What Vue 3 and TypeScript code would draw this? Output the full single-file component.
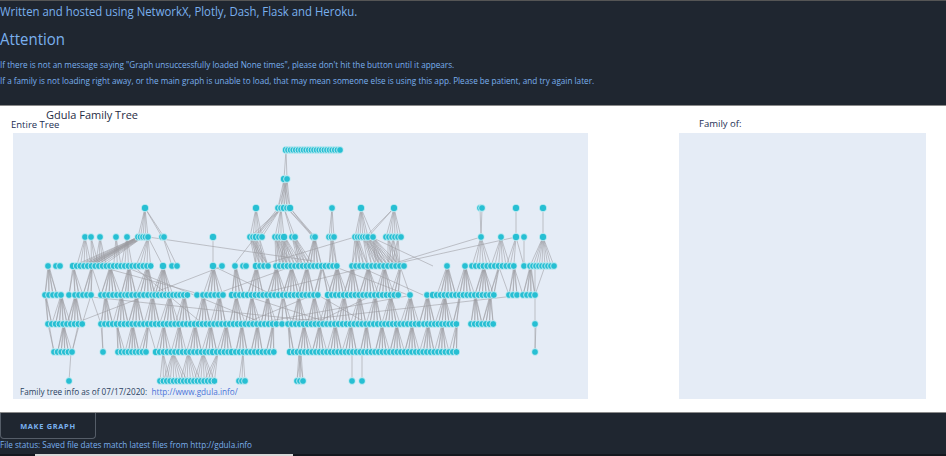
<script setup lang="ts">
// x ranges per generation: [from, to, step]
type Range = [number, number, number]
// parent x, first child x, last child x
type Family = [number, number, number]

const rowY = [17, 46, 75, 104, 133, 162, 191, 219, 248]

const ranges: Range[][] = [
  [[273, 273, 1], [275, 326, 2.6]],
  [[271, 271, 1], [274, 274, 1]],
  [[132, 132, 1], [243, 243, 1], [265, 278, 3], [319, 319, 1], [348, 348, 1], [381, 381, 1], [467, 469, 2], [503, 503, 1], [530, 530, 1]],
  [[72, 72, 1], [78, 78, 1], [87, 87, 1], [103, 103, 1], [114, 114, 1], [125, 135, 2.5], [149, 151, 2], [200, 200, 1], [237, 249, 3], [262, 272, 3], [279, 282, 3], [300, 302, 2], [316, 321, 2.5], [342, 355, 2.6], [360, 360, 1], [373, 387, 3], [468, 468, 1], [488, 488, 1], [503, 503, 1], [511, 511, 1], [530, 530, 1]],
  [[35, 35, 1], [43, 47, 4], [60, 136, 3.7], [150, 150, 1], [159, 164, 5], [200, 200, 1], [209, 209, 1], [222, 222, 1], [230, 233, 3], [243, 254, 4], [263, 325, 3.8], [339, 389, 4], [434, 434, 1], [452, 452, 1], [459, 502, 3.8], [511, 511, 1], [517, 542, 3]],
  [[32, 49, 4], [56, 56, 1], [62, 78, 4], [88, 110, 4], [115, 137, 4], [142, 174, 3.6], [184, 184, 1], [190, 210, 4], [219, 305, 3.9], [315, 385, 3.9], [397, 397, 1], [414, 414, 1], [420, 480, 3.8], [496, 504, 4], [510, 523, 4]],
  [[35, 69, 3.8], [88, 264, 3.9], [269, 269, 1], [275, 367, 3.9], [372, 405, 3.8], [411, 442, 3.6], [458, 480, 3.7], [522, 522, 1]],
  [[41, 58, 3.6], [90, 90, 1], [105, 132, 3.5], [143, 260, 3.8], [277, 442, 3.7], [522, 522, 1]],
  [[56, 56, 1], [147, 203, 3.4], [226, 232, 3], [284, 289, 3], [339, 339, 1], [349, 349, 1]],
]

const heavy = new Set([273, 271, 132, 243, 348, 381, 503, 530, 200, 60, 150, 219, 315, 420, 143, 277])

const nodes = ranges.map((row) => {
  const xs: number[] = []
  for (const [from, to, step] of row) {
    if (from === to) {
      xs.push(from)
      continue
    }
    const n = Math.round((to - from) / step)
    for (let i = 0; i <= n; i++) xs.push(Math.round((from + i * step) * 10) / 10)
  }
  return xs
})

// hand-placed fans for the upper generations and the last one
const families: Record<number, Family[]> = {
  0: [[273, 271, 275]],
  1: [[271, 264, 280], [274, 264, 280]],
  2: [[132, 124, 136], [132, 148, 152], [243, 236, 250], [268, 237, 249], [268, 261, 273], [271, 278, 283], [274, 299, 303], [277, 299, 303], [319, 315, 322], [348, 341, 356], [348, 359, 361], [381, 372, 388], [381, 352, 356], [467, 467, 469], [469, 467, 469], [503, 503, 504], [530, 530, 531]],
  3: [[72, 62, 80], [78, 76, 88], [87, 80, 96], [103, 98, 110], [114, 106, 120], [125, 60, 80], [127, 66, 84], [130, 70, 90], [135, 122, 150], [150, 156, 165], [200, 200, 201], [237, 243, 255], [240, 243, 255], [243, 243, 255], [246, 248, 258], [262, 263, 275], [265, 263, 280], [268, 270, 286], [272, 266, 290], [279, 285, 298], [282, 285, 302], [301, 293, 310], [302, 293, 310], [318, 316, 328], [320, 316, 328], [342, 339, 356], [345, 339, 356], [350, 355, 372], [353, 359, 378], [355, 364, 385], [360, 360, 388], [375, 375, 390], [380, 375, 390], [385, 378, 390], [468, 459, 478], [488, 478, 500], [503, 490, 512], [511, 511, 512], [530, 517, 543]],
  7: [[58, 56, 57], [150, 147, 160], [160, 150, 175], [175, 165, 190], [190, 178, 203], [205, 190, 203], [230, 226, 233], [286, 284, 290], [288, 284, 290], [339, 339, 340], [349, 349, 350]],
}

// narrow near-vertical fans for the crowded middle generations
const autoFans = (row: number, spacing: number, reach: number): Family[] => {
  const out: Family[] = []
  let last = -100
  for (const x of nodes[row]) {
    if (x - last < spacing) continue
    out.push([x, x - reach, x + reach], [x + 1, x - reach + 2, x + reach - 2])
    last = x
  }
  return out
}
families[4] = autoFans(4, 15, 11)
families[5] = autoFans(5, 14, 10)
families[6] = autoFans(6, 13, 9)

// long cross links, in plot coordinates
const links: [number, number, number, number][] = [
  [135, 104, 300, 128], [265, 75, 220, 133], [358, 133, 250, 160],
  [342, 104, 245, 133], [468, 104, 372, 133], [503, 104, 372, 133], [358, 104, 420, 133], [510, 162, 255, 191],
  [210, 133, 60, 191], [60, 162, 330, 191], [110, 133, 252, 191], [305, 162, 355, 191], [400, 162, 240, 191],
  [85, 133, 190, 162], [200, 133, 260, 162], [320, 133, 395, 162], [345, 133, 410, 162], [230, 162, 320, 191],
  [120, 133, 190, 191], [280, 133, 200, 162], [300, 162, 230, 191], [360, 162, 300, 191], [522, 133, 522, 191],
]

const edges = Object.entries(families).flatMap(([key, row]) => {
  const i = Number(key)
  return row.flatMap(([px, from, to]) =>
    nodes[i + 1]
      .filter((x) => x >= from && x <= to)
      .map((x) => ({ x1: px, y1: rowY[i], x2: x, y2: rowY[i + 1] })),
  )
})
</script>

<template>
  <div class="page">
    <header class="top">
      <p class="lead">Written and hosted using NetworkX, Plotly, Dash, Flask and Heroku.</p>
      <h2>Attention</h2>
      <p class="note first">If there is not an message saying "Graph unsuccessfully loaded None times", please don't hit the button until it appears.</p>
      <p class="note">If a family is not loading right away, or the main graph is unable to load, that may mean someone else is using this app. Please be patient, and try again later.</p>
    </header>

    <main class="graphs">
      <section class="left">
        <div class="title">Gdula Family Tree</div>
        <div class="label">Entire Tree</div>
        <div class="plot">
          <svg width="575" height="266" viewBox="0 0 575 266">
            <g stroke="#9b9ba0" stroke-width="0.7" stroke-opacity="0.8">
              <line v-for="(e, i) in edges" :key="i" :x1="e.x1" :y1="e.y1" :x2="e.x2" :y2="e.y2" />
              <line v-for="(l, i) in links" :key="'l' + i" :x1="l[0]" :y1="l[1]" :x2="l[2]" :y2="l[3]" />
            </g>
            <g v-for="(xs, r) in nodes" :key="r">
              <circle
                v-for="x in xs"
                :key="x"
                :cx="x"
                :cy="rowY[r]"
                :r="heavy.has(x) ? 3.8 : 3.4"
                fill="#27bfd3"
                stroke="#eef6fa"
                stroke-width="0.7"
              />
            </g>
          </svg>
          <div class="caption">Family tree info as of 07/17/2020:&nbsp; <a href="#">http://www.gdula.info/</a></div>
        </div>
      </section>
      <section class="right">
        <div class="label family">Family of:</div>
        <div class="plot"></div>
      </section>
    </main>

    <footer class="bottom">
      <button class="make" type="button">MAKE GRAPH</button>
      <div class="status">File status: Saved file dates match latest files from http://gdula.info</div>
      <div class="strip"><span></span></div>
    </footer>
  </div>
</template>

<style>
body {
  background: #fff;
  overflow: hidden;
}
</style>

<style scoped>
.page {
  width: 946px;
  height: 456px;
  display: flex;
  flex-direction: column;
  font-family: "Open Sans", "Liberation Sans", sans-serif;
  overflow: hidden;
}
.top {
  height: 106px;
  box-sizing: border-box;
  padding-top: 2px;
  background: #1f2630;
  color: #7ab0ee;
  border-top: 1px solid #555;
  border-bottom: 1px solid #8a8a8a;
}
.top p,
.top h2 {
  margin: 0;
  font-weight: 400;
  transform: scaleX(0.875);
  transform-origin: left center;
  white-space: nowrap;
}
.lead {
  font-size: 13px;
  line-height: 17px;
}
.top h2 {
  font-size: 17.1px;
  line-height: 24px;
  margin-top: 7px;
}
.top .note {
  font-size: 9.34px;
  line-height: 12px;
  margin-top: 4px;
}
.top .first {
  margin-top: 8px;
}
.graphs {
  flex: 1;
  display: flex;
  background: #fff;
  color: #2a3f5f;
}
.left {
  width: 575px;
  margin-left: 13px;
}
.right {
  width: 247px;
  margin-left: 91px;
}
.title {
  font-size: 11px;
  line-height: 14px;
  color: #1f2c44;
  margin: 2px 0 0 33px;
}
.label {
  font-size: 9.5px;
  line-height: 10px;
  margin: -2px 0 0 -2px;
  height: 13px;
  color: #1d2f55;
}
.family {
  margin: 13px 0 4px 20px;
  height: 10px;
}
.plot {
  position: relative;
  height: 266px;
  background: #e5ecf6;
}
.plot svg {
  display: block;
}
.caption {
  position: absolute;
  left: 7px;
  bottom: 1px;
  font-size: 8.2px;
  line-height: 12px;
  color: #2a3f5f;
}
.caption a {
  color: #4a74d9;
  text-decoration: none;
}
.bottom {
  height: 44px;
  box-sizing: border-box;
  background: #1f2630;
  color: #7ab0ee;
  border-top: 1px solid #8a8a8a;
  display: flex;
  flex-direction: column;
  align-items: flex-start;
}
.make {
  width: 96px;
  height: 26px;
  padding: 0;
  box-sizing: border-box;
  background: transparent;
  border: 1px solid #555d68;
  border-top: 0;
  border-radius: 0 0 4px 4px;
  color: #7ab0ee;
  font-family: inherit;
  font-size: 7.4px;
  font-weight: 700;
  letter-spacing: 0.7px;
}
.status {
  font-size: 9.3px;
  line-height: 12px;
  white-space: nowrap;
  transform: scaleX(0.875);
  transform-origin: left center;
}
.strip {
  width: 100%;
  height: 2px;
  margin-top: 3px;
  background: #14181f;
}
.strip span {
  display: block;
  width: 258px;
  height: 2px;
  margin-left: 35px;
  background: #d8d8d8;
}
</style>
